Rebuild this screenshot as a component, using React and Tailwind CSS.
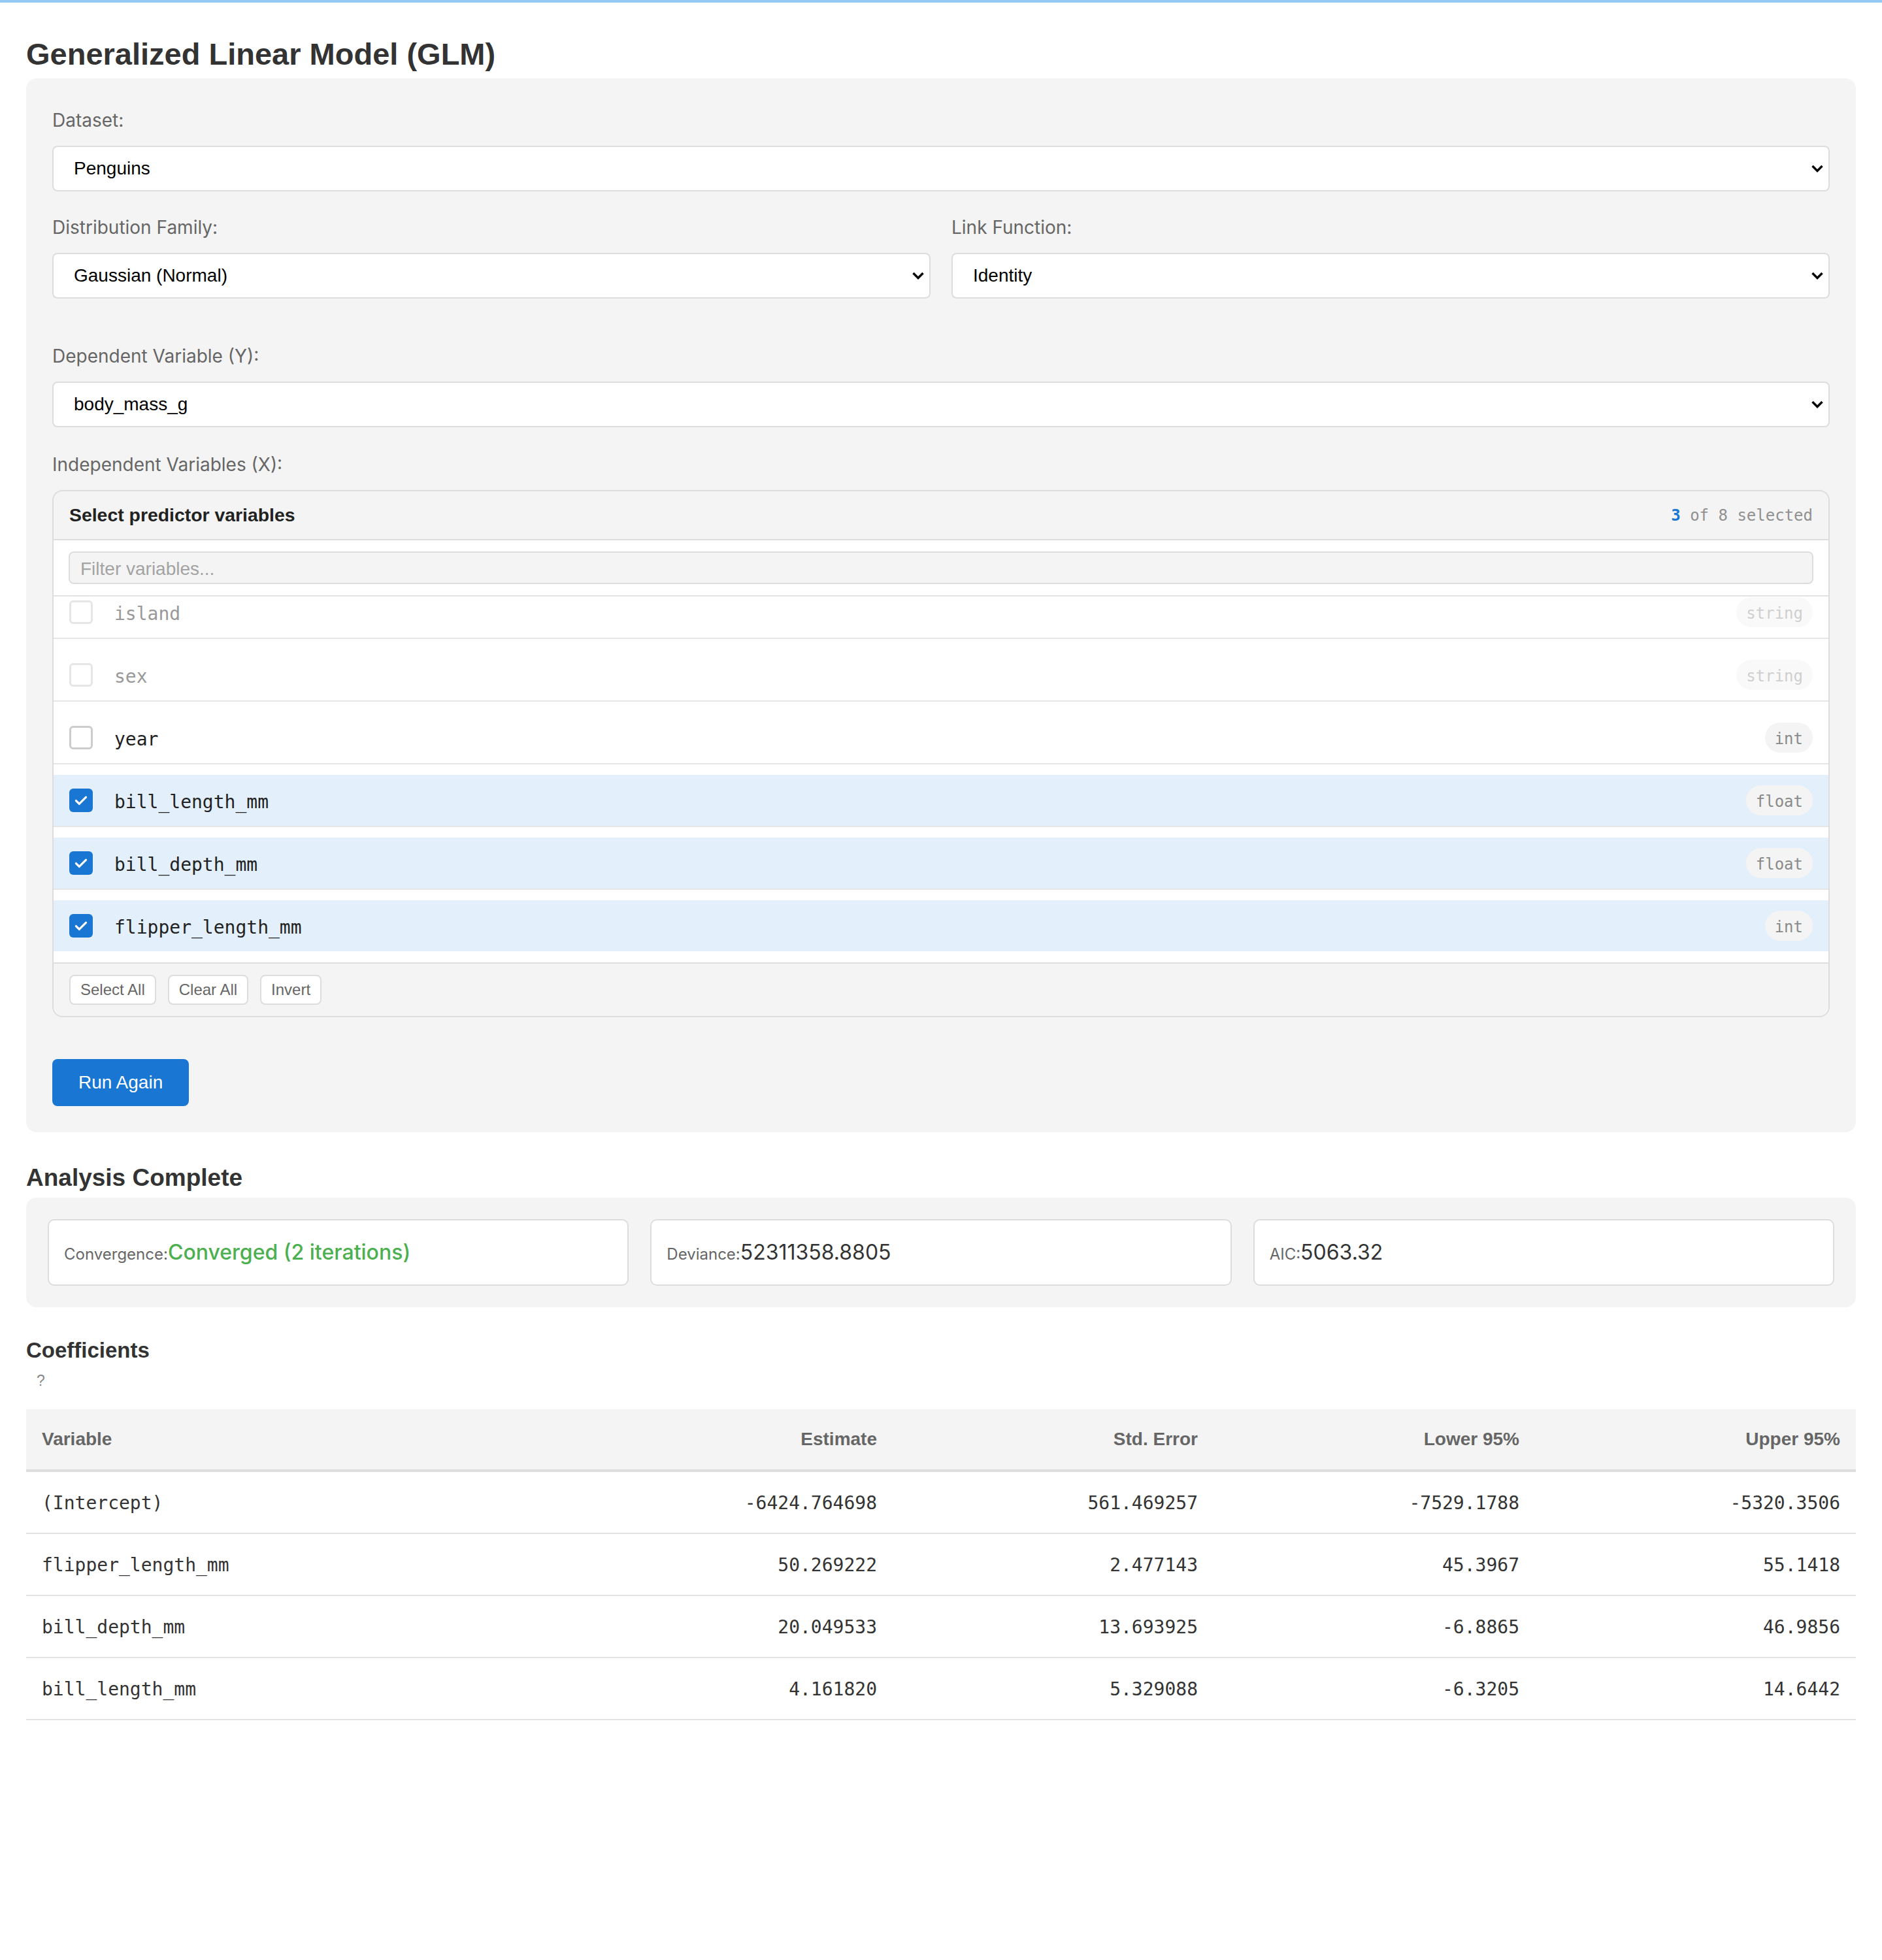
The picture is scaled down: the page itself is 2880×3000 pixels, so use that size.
import React from "react";

function Label({ children }) {
  return (
    <div className="mb-[19px] text-[28px] leading-[40px] font-['Inter',sans-serif] text-[#666]">
      {children}
    </div>
  );
}

function Select({ value }) {
  return (
    <div className="flex h-[70px] items-center justify-between rounded-[8px] border-2 border-[#dddddd] bg-white pl-[31px] pr-[7px]">
      <span className="text-[28px] text-black">{value}</span>
      <svg width="20" height="14" viewBox="0 0 20 14">
        <path d="M2.5 3 L10 10.5 L17.5 3" fill="none" stroke="#000" strokeWidth="3.4" />
      </svg>
    </div>
  );
}

function Checkbox({ checked, disabled }) {
  if (checked) {
    return (
      <div className="flex h-[36px] w-[36px] shrink-0 items-center justify-center rounded-[6px] bg-[#1976d2]">
        <svg width="26" height="26" viewBox="0 0 24 24">
          <path d="M5 12.5l4.5 4.5L19 7.5" fill="none" stroke="#fff" strokeWidth="3" strokeLinecap="round" strokeLinejoin="round" />
        </svg>
      </div>
    );
  }
  return (
    <div
      className={
        disabled
          ? "h-[36px] w-[36px] shrink-0 rounded-[6px] border-[3px] border-[#e6e6e6] bg-white"
          : "h-[36px] w-[36px] shrink-0 rounded-[6px] border-[3px] border-[#cccccc] bg-white"
      }
    />
  );
}

function Item({ name, type, checked, disabled, last }) {
  return (
    <div className={last ? "mt-[16px]" : "mt-[16px] border-b-2 border-[#e6e6e6]"}>
      <div
        className={
          checked
            ? "flex h-[78px] items-center bg-[#e3f0fb] px-[24px]"
            : "flex h-[78px] items-center bg-white px-[24px]"
        }
      >
        <Checkbox checked={checked} disabled={disabled} />
        <span
          className={
            disabled
              ? "ml-[33px] pt-[6px] font-['DejaVu_Sans_Mono',monospace] text-[28px] text-[#999]"
              : "ml-[33px] pt-[6px] font-['DejaVu_Sans_Mono',monospace] text-[28px] text-[#222]"
          }
        >
          {name}
        </span>
        <span
          className={
            disabled
              ? "ml-auto flex h-[46px] items-center rounded-full bg-[#f9f9f9] px-[15px] pt-[3px] font-['DejaVu_Sans_Mono',monospace] text-[24px] text-[#cfcfcf]"
              : "ml-auto flex h-[46px] items-center rounded-full bg-[#f4f4f4] px-[15px] pt-[3px] font-['DejaVu_Sans_Mono',monospace] text-[24px] text-[#8a8a8a]"
          }
        >
          {type}
        </span>
      </div>
    </div>
  );
}

function SmallButton({ children }) {
  return (
    <button className="h-[46px] rounded-[8px] border-2 border-[#dddddd] bg-white px-[15px] text-[24px] text-[#666]">
      {children}
    </button>
  );
}

function StatCard({ label, children }) {
  return (
    <div className="flex h-[102px] items-center rounded-[10px] border-2 border-[#dddddd] bg-white px-[23px]">
      <div className="font-['Inter',sans-serif]">
        <span className="text-[24px] text-[#666]">{label}</span>
        {children}
      </div>
    </div>
  );
}

const rows = [
  ["(Intercept)", "-6424.764698", "561.469257", "-7529.1788", "-5320.3506"],
  ["flipper_length_mm", "50.269222", "2.477143", "45.3967", "55.1418"],
  ["bill_depth_mm", "20.049533", "13.693925", "-6.8865", "46.9856"],
  ["bill_length_mm", "4.161820", "5.329088", "-6.3205", "14.6442"],
];

export default function App() {
  return (
    <div className="min-h-[3000px] bg-white font-['Liberation_Sans',Arial,sans-serif] text-[#333]">
      <div className="h-[4px] bg-[#93c9f2]" />
      <div className="px-[40px] pt-[51px]">
        <h1 className="text-[47px] font-bold leading-[56px] text-[#333]">
          Generalized Linear Model (GLM)
        </h1>

        <div className="mt-[9px] rounded-[16px] bg-[#f4f4f4] px-[40px] pb-[40px] pt-[44px]">
          <Label>Dataset:</Label>
          <Select value="Penguins" />

          <div className="mt-[35px] grid grid-cols-2 gap-x-[32px]">
            <div>
              <Label>Distribution Family:</Label>
              <Select value="Gaussian (Normal)" />
            </div>
            <div>
              <Label>Link Function:</Label>
              <Select value="Identity" />
            </div>
          </div>

          <div className="mt-[68px]">
            <Label>Dependent Variable (Y):</Label>
            <Select value="body_mass_g" />
          </div>

          <div className="mt-[37px]">
            <Label>Independent Variables (X):</Label>
            <div className="overflow-hidden rounded-[16px] border-2 border-[#dddddd]">
              <div className="flex h-[75px] items-center justify-between border-b-2 border-[#dddddd] bg-[#f4f4f4] px-[24px]">
                <span className="text-[28.4px] font-bold text-[#222]">Select predictor variables</span>
                <span className="font-['DejaVu_Sans_Mono',monospace] text-[24px] text-[#909090]">
                  <span className="font-bold text-[#1976d2]">3</span> of 8 selected
                </span>
              </div>
              <div className="border-b-2 border-[#e2e2e2] bg-white px-[23px] pb-[17px] pt-[17px]">
                <input
                  readOnly
                  placeholder="Filter variables..."
                  className="block h-[50px] w-full rounded-[8px] border-2 border-[#dddddd] bg-[#f4f4f4] px-[16px] pt-[4px] text-[28px] outline-none placeholder:text-[#a3a3a3]"
                />
              </div>
              <div className="h-[560px] overflow-hidden bg-white">
                <div className="-mt-[31px] flex flex-col">
                  <Item name="island" type="string" disabled />
                  <Item name="sex" type="string" disabled />
                  <Item name="year" type="int" />
                  <Item name="bill_length_mm" type="float" checked />
                  <Item name="bill_depth_mm" type="float" checked />
                  <Item name="flipper_length_mm" type="int" checked last />
                </div>
              </div>
              <div className="flex gap-[18px] border-t-2 border-[#dddddd] bg-[#f4f4f4] px-[24px] py-[17px]">
                <SmallButton>Select All</SmallButton>
                <SmallButton>Clear All</SmallButton>
                <SmallButton>Invert</SmallButton>
              </div>
            </div>
          </div>

          <button className="mt-[64px] h-[72px] rounded-[8px] bg-[#1976d2] px-[40px] text-[28px] text-white">
            Run Again
          </button>
        </div>

        <h2 className="mt-[48px] text-[37px] font-bold leading-[44px] text-[#333]">Analysis Complete</h2>
        <div className="mt-[8px] grid grid-cols-3 gap-[33px] rounded-[16px] bg-[#f4f4f4] p-[33px]">
          <StatCard label="Convergence:">
            <span className="text-[32px] font-medium text-[#4caf50]">Converged (2 iterations)</span>
          </StatCard>
          <StatCard label="Deviance:">
            <span className="text-[32px] text-[#333]">52311358.8805</span>
          </StatCard>
          <StatCard label="AIC:">
            <span className="text-[32px] text-[#333]">5063.32</span>
          </StatCard>
        </div>

        <h3 className="mt-[46px] text-[33px] font-bold leading-[40px] text-[#333]">Coefficients</h3>
        <div className="mt-[10px] pl-[16px] text-[23px] leading-[32px] text-[#888]">?</div>

        <div className="mt-[28px]">
          <div className="grid h-[96px] grid-cols-[835px_491px_491px_492px_491px] items-center border-b-4 border-[#dddddd] bg-[#f4f4f4] text-[28px] font-bold text-[#666]">
            <div className="px-[24px]">Variable</div>
            <div className="px-[24px] text-right">Estimate</div>
            <div className="px-[24px] text-right">Std. Error</div>
            <div className="px-[24px] text-right">Lower 95%</div>
            <div className="px-[24px] text-right">Upper 95%</div>
          </div>
          {rows.map((r) => (
            <div
              key={r[0]}
              className="grid h-[95px] grid-cols-[835px_491px_491px_492px_491px] items-center border-b-2 border-[#e2e2e2] pt-[2px] font-['DejaVu_Sans_Mono',monospace] text-[28px] text-[#333]"
            >
              <div className="px-[24px]">{r[0]}</div>
              <div className="px-[24px] text-right">{r[1]}</div>
              <div className="px-[24px] text-right">{r[2]}</div>
              <div className="px-[24px] text-right">{r[3]}</div>
              <div className="px-[24px] text-right">{r[4]}</div>
            </div>
          ))}
        </div>
      </div>
    </div>
  );
}
